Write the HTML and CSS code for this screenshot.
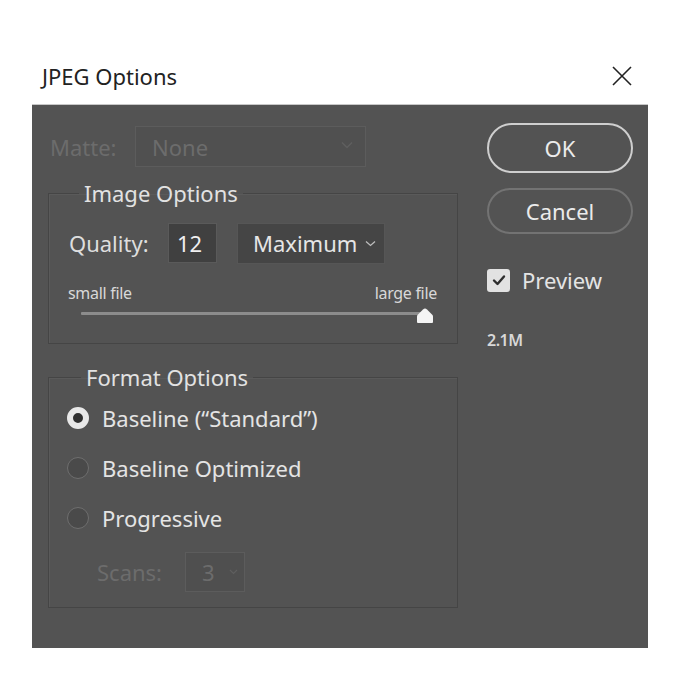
FILE: index.html
```html
<!DOCTYPE html>
<html>
<head>
<meta charset="utf-8">
<link rel="stylesheet" href="styles.css">
</head>
<body>
<div class="window">
  <div class="titlebar">
    <span class="title">JPEG Options</span>
    <svg class="close" width="20" height="20" viewBox="0 0 20 20"><path d="M1 1 L19 19 M19 1 L1 19" stroke="#222" stroke-width="1.6" fill="none"/></svg>
  </div>
  <div class="panel">
    <div class="left">
      <div class="matte-row">
        <span class="label disabled matte-label">Matte:</span>
        <div class="select matte-select disabled">
          <span>None</span>
          <svg class="chev" width="12" height="8" viewBox="0 0 12 8"><path d="M1 1.5 L6 6.5 L11 1.5" stroke="#5f5f5f" stroke-width="1.4" fill="none"/></svg>
        </div>
      </div>

      <fieldset class="group group-image">
        <legend>Image Options</legend>
        <div class="quality-row">
          <span class="label">Quality:</span>
          <div class="num-input">12</div>
          <div class="select max-select">
            <span>Maximum</span>
            <svg class="chev" width="11" height="7" viewBox="0 0 11 7"><path d="M1 1.5 L5.5 5.5 L10 1.5" stroke="#bdbdbd" stroke-width="1.3" fill="none"/></svg>
          </div>
        </div>
        <div class="size-labels">
          <span>small file</span>
          <span>large file</span>
        </div>
        <div class="slider">
          <div class="track"></div>
          <svg class="thumb" width="18" height="17" viewBox="0 0 18 17"><path d="M9 1.5 Q10 1.5 11 2.5 L16.5 8 Q17 8.5 17 9.5 L17 15 Q17 16 16 16 L2 16 Q1 16 1 15 L1 9.5 Q1 8.5 1.5 8 L7 2.5 Q8 1.5 9 1.5 Z" fill="#f4f4f4"/></svg>
        </div>
      </fieldset>

      <fieldset class="group group-format">
        <legend>Format Options</legend>
        <div class="radio-row">
          <span class="radio checked"></span>
          <span class="rtext">Baseline (“Standard”)</span>
        </div>
        <div class="radio-row">
          <span class="radio"></span>
          <span class="rtext">Baseline Optimized</span>
        </div>
        <div class="radio-row">
          <span class="radio"></span>
          <span class="rtext">Progressive</span>
        </div>
        <div class="scans-row">
          <span class="label disabled">Scans:</span>
          <div class="select scans-select disabled">
            <span>3</span>
            <svg class="chev" width="9" height="6" viewBox="0 0 9 6"><path d="M1 1 L4.5 4.5 L8 1" stroke="#5f5f5f" stroke-width="1.2" fill="none"/></svg>
          </div>
        </div>
      </fieldset>
    </div>

    <div class="right">
      <div class="btn btn-ok">OK</div>
      <div class="btn btn-cancel">Cancel</div>
      <div class="preview-row">
        <span class="checkbox"><svg width="16" height="16" viewBox="0 0 16 16"><path d="M3 8.5 L6.5 12 L13 4.5" stroke="#2e2e2e" stroke-width="2.4" fill="none" stroke-linecap="round" stroke-linejoin="round"/></svg></span>
        <span class="ptext">Preview</span>
      </div>
      <div class="filesize">2.1M</div>
    </div>
  </div>
</div>
</body>
</html>
```

FILE: styles.css
```css
* { box-sizing: border-box; }

html, body {
  margin: 0;
  padding: 0;
  background: #ffffff;
}

body {
  font-family: "Noto Sans", "Open Sans", sans-serif;
  width: 680px;
  height: 680px;
  overflow: hidden;
}

.window {
  width: 616px;
  margin-left: 32px;
}

.titlebar {
  height: 105px;
  padding: 48px 16px 0 10px;
  display: flex;
  align-items: center;
  justify-content: space-between;
  border-bottom: 1px solid #c8c8c8;
}

.title {
  font-size: 22px;
  color: #222;
}

.panel {
  background: #535353;
  height: 543px;
  display: flex;
  padding: 21px 0 0 16px;
  color: #e2e2e2;
}

.left {
  width: 410px;
}

.label {
  font-size: 22px;
  color: #dedede;
}

.disabled,
.label.disabled {
  color: #6c6c6c;
}

.matte-row {
  height: 41px;
  display: flex;
  align-items: center;
}

.matte-label {
  width: 87px;
  padding-left: 2px;
}

.select {
  display: flex;
  align-items: center;
  justify-content: space-between;
  border: 1px solid #5c5c5c;
  background: #4e4e4e;
  font-size: 22px;
  color: #e6e6e6;
}

.matte-select {
  width: 231px;
  height: 41px;
  padding: 0 12px 0 16px;
  color: #6c6c6c;
  background: #505050;
}

.matte-select .chev { margin-top: -4px; }

.group {
  margin: 12px 0 0 0;
  border: 1px solid #454545;
  box-shadow: inset 1px 1px 0 #5a5a5a;
  min-inline-size: 0;
}

.group legend {
  font-size: 22px;
  line-height: 28px;
  color: #e2e2e2;
  padding: 0 5px;
}

.group-image {
  padding: 16px 20px 19px 20px;
}

.group-image legend {
  margin-left: 10px;
}

.quality-row {
  display: flex;
  align-items: center;
  height: 40px;
}

.quality-row .label {
  width: 99px;
}

.num-input {
  width: 49px;
  height: 40px;
  background: #404040;
  border: 1px solid #5a5a5a;
  font-size: 22px;
  color: #f0f0f0;
  display: flex;
  align-items: center;
  padding-left: 8px;
}

.max-select {
  margin-left: 20px;
  width: 148px;
  height: 41px;
  padding: 0 8px 0 15px;
  background: #454545;
  border-color: #565656;
}

.size-labels {
  display: flex;
  justify-content: space-between;
  margin-top: 21px;
  font-size: 16px;
  line-height: 18px;
  color: #d8d8d8;
  margin-left: -1px;
  letter-spacing: -0.3px;
}

.slider {
  position: relative;
  height: 20px;
  margin: 2px 12px 0 12px;
}

.track {
  position: absolute;
  left: 0;
  right: 0;
  top: 8px;
  height: 3px;
  background: #8c8c8c;
  border-radius: 1px;
}

.thumb {
  position: absolute;
  right: -9px;
  top: 3px;
}

.group-format {
  margin-top: 19px;
  padding: 12px 18px 15px 18px;
}

.group-format legend {
  margin-left: 14px;
}

.radio-row {
  display: flex;
  align-items: center;
  height: 30px;
  margin-bottom: 20px;
}

.radio-row:nth-child(4) { margin-bottom: 19px; }

.radio {
  width: 22px;
  height: 22px;
  border-radius: 50%;
  background: #4a4a4a;
  border: 1.5px solid #6e6e6e;
  margin-right: 13px;
  flex: none;
}

.radio.checked {
  border: 6.5px solid #e8e8e8;
  background: #2f2f2f;
}

.rtext {
  font-size: 22px;
  color: #e4e4e4;
}

.scans-row {
  display: flex;
  align-items: center;
  height: 40px;
  padding-left: 30px;
}

.scans-row .label {
  width: 88px;
}

.scans-select {
  width: 60px;
  height: 40px;
  padding: 0 6px 0 16px;
  color: #6c6c6c;
  background: #4f4f4f;
}

.right {
  margin-left: 29px;
  width: 146px;
  margin-top: -3px;
}

.btn {
  display: flex;
  align-items: center;
  justify-content: center;
  border-radius: 25px;
  font-size: 22px;
  color: #ebebeb;
}

.btn-ok {
  height: 50px;
  border: 2px solid #cfcfcf;
}

.btn-cancel {
  height: 46px;
  margin-top: 15px;
  border: 2px solid #737373;
}

.preview-row {
  display: flex;
  align-items: center;
  margin-top: 34px;
  height: 24px;
}

.checkbox {
  width: 23px;
  height: 23px;
  background: #e2e2e2;
  border-radius: 3px;
  display: flex;
  align-items: center;
  justify-content: center;
  margin-right: 12px;
}

.ptext {
  font-size: 22px;
  color: #e4e4e4;
}

.filesize {
  margin-top: 39px;
  margin-left: 0;
  font-size: 16px;
  line-height: 18px;
  color: #d8d8d8;
  font-weight: 600;
  letter-spacing: -0.5px;
}
```
